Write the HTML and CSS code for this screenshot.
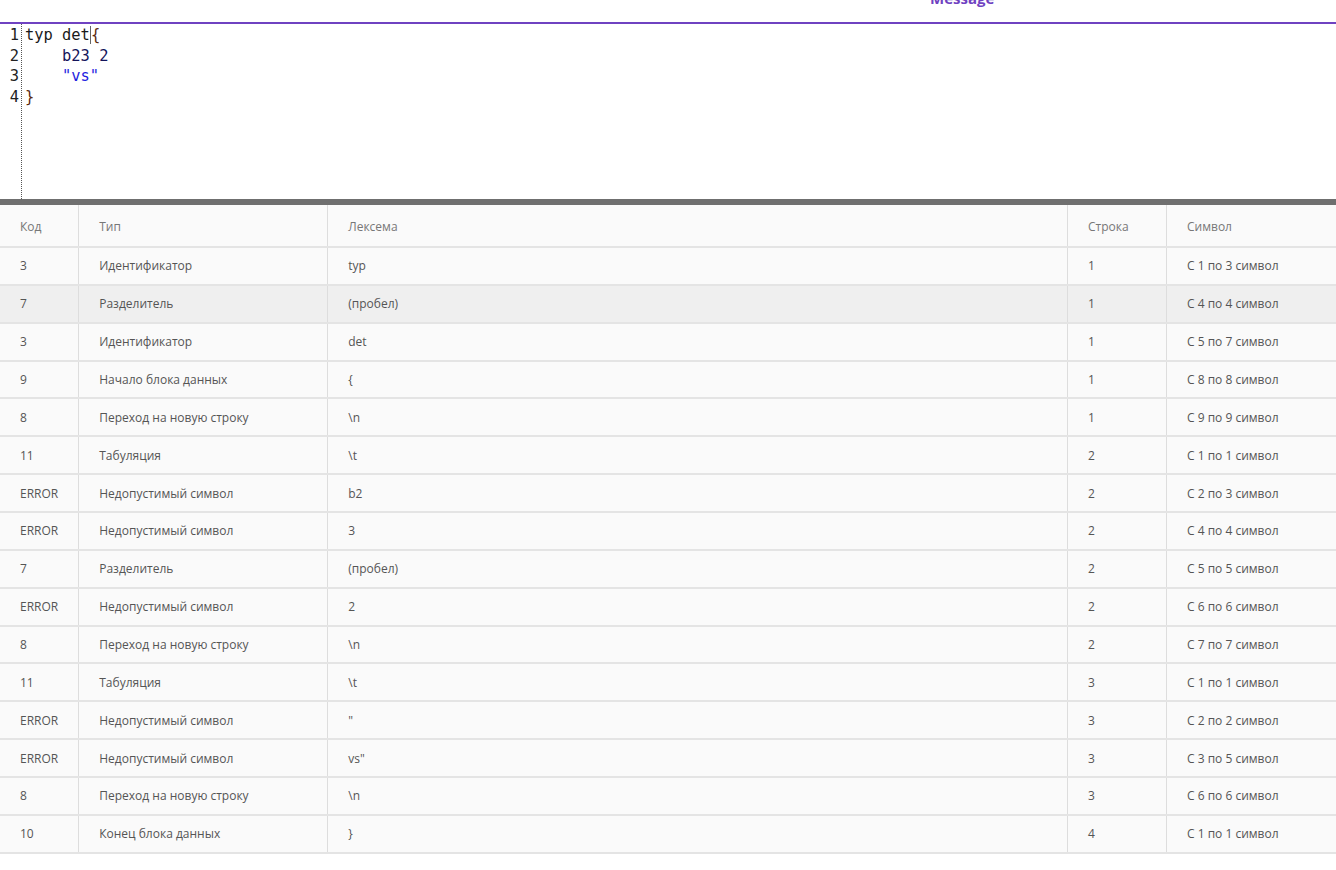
FILE: index.html
```html
<!DOCTYPE html>
<html lang="ru">
<head>
<meta charset="utf-8">
<title>Lexer</title>
<link rel="stylesheet" href="styles.css">
</head>
<body>
<header class="topbar">
  <span class="tab-label">Message</span>
</header>
<section class="editor">
  <div class="gutter">
    <div>1</div><div>2</div><div>3</div><div>4</div>
  </div>
  <div class="code">
    <div class="ln"><span class="c-id">typ det</span><span class="cursor"></span><span class="c-br">{</span></div>
    <div class="ln"><span class="c-err">    b23 2</span></div>
    <div class="ln"><span class="c-str">    "vs"</span></div>
    <div class="ln"><span class="c-br">}</span></div>
  </div>
</section>
<div class="splitter"></div>
<table class="lex">
  <thead>
    <tr><th class="w-code">Код</th><th class="w-type">Тип</th><th>Лексема</th><th class="w-row">Строка</th><th class="w-sym">Символ</th></tr>
  </thead>
  <tbody>
    <tr><td>3</td><td>Идентификатор</td><td>typ</td><td>1</td><td>С 1 по 3 символ</td></tr>
    <tr class="hover"><td>7</td><td>Разделитель</td><td>(пробел)</td><td>1</td><td>С 4 по 4 символ</td></tr>
    <tr><td>3</td><td>Идентификатор</td><td>det</td><td>1</td><td>С 5 по 7 символ</td></tr>
    <tr><td>9</td><td>Начало блока данных</td><td>{</td><td>1</td><td>С 8 по 8 символ</td></tr>
    <tr><td>8</td><td>Переход на новую строку</td><td>\n</td><td>1</td><td>С 9 по 9 символ</td></tr>
    <tr><td>11</td><td>Табуляция</td><td>\t</td><td>2</td><td>С 1 по 1 символ</td></tr>
    <tr><td>ERROR</td><td>Недопустимый символ</td><td>b2</td><td>2</td><td>С 2 по 3 символ</td></tr>
    <tr><td>ERROR</td><td>Недопустимый символ</td><td>3</td><td>2</td><td>С 4 по 4 символ</td></tr>
    <tr><td>7</td><td>Разделитель</td><td>(пробел)</td><td>2</td><td>С 5 по 5 символ</td></tr>
    <tr><td>ERROR</td><td>Недопустимый символ</td><td>2</td><td>2</td><td>С 6 по 6 символ</td></tr>
    <tr><td>8</td><td>Переход на новую строку</td><td>\n</td><td>2</td><td>С 7 по 7 символ</td></tr>
    <tr><td>11</td><td>Табуляция</td><td>\t</td><td>3</td><td>С 1 по 1 символ</td></tr>
    <tr><td>ERROR</td><td>Недопустимый символ</td><td>"</td><td>3</td><td>С 2 по 2 символ</td></tr>
    <tr><td>ERROR</td><td>Недопустимый символ</td><td>vs"</td><td>3</td><td>С 3 по 5 символ</td></tr>
    <tr><td>8</td><td>Переход на новую строку</td><td>\n</td><td>3</td><td>С 6 по 6 символ</td></tr>
    <tr><td>10</td><td>Конец блока данных</td><td>}</td><td>4</td><td>С 1 по 1 символ</td></tr>
  </tbody>
</table>
</body>
</html>
```
FILE: styles.css
```css
html, body {
  margin: 0;
  padding: 0;
  background: #ffffff;
}

.topbar {
  height: 22px;
  border-bottom: 2px solid #6f42c1;
  position: relative;
  overflow: hidden;
}

.tab-label {
  position: absolute;
  left: 930px;
  top: -12px;
  font-family: "Open Sans", sans-serif;
  font-weight: 700;
  font-size: 15px;
  color: #6f42c1;
}

.editor {
  display: flex;
  height: 175px;
  font-family: "DejaVu Sans Mono", monospace;
  font-size: 15.4px;
  line-height: 20.5px;
}

.gutter {
  width: 19px;
  padding-top: 1px;
  padding-right: 2px;
  text-align: right;
  color: #222;
  border-right: 1px dotted #555;
}

.code {
  padding-top: 1px;
  padding-left: 3px;
}

.ln {
  white-space: pre;
  height: 20.5px;
}

.c-id { color: #1a1a1a; }
.c-br { color: #5a2a10; }
.c-err { color: #14145a; }
.c-str { color: #1e1ee0; }

.cursor {
  display: inline-block;
  width: 1px;
  height: 18px;
  background: #666;
  vertical-align: -4px;
}

.splitter {
  height: 6px;
  background: #6f6f6f;
}

.lex {
  width: 100%;
  border-collapse: collapse;
  font-family: "Open Sans", sans-serif;
  font-size: 12px;
  color: #555;
  background: #fafafa;
}

.lex th, .lex td {
  text-align: left;
  padding: 0 20px;
  border-bottom: 2px solid #e4e4e4;
  border-left: 1px solid #dddddd;
  font-weight: 400;
  height: 35.87px;
}

.lex th {
  height: 40px;
  padding-top: 1px;
  color: #777;
}

.lex th:first-child, .lex td:first-child {
  border-left: none;
}

.lex tr.hover td {
  background: #efefef;
}

.w-code { width: 37px; }
.w-type { width: 208px; }
.w-row { width: 58px; }
.w-sym { width: 129px; }
```
